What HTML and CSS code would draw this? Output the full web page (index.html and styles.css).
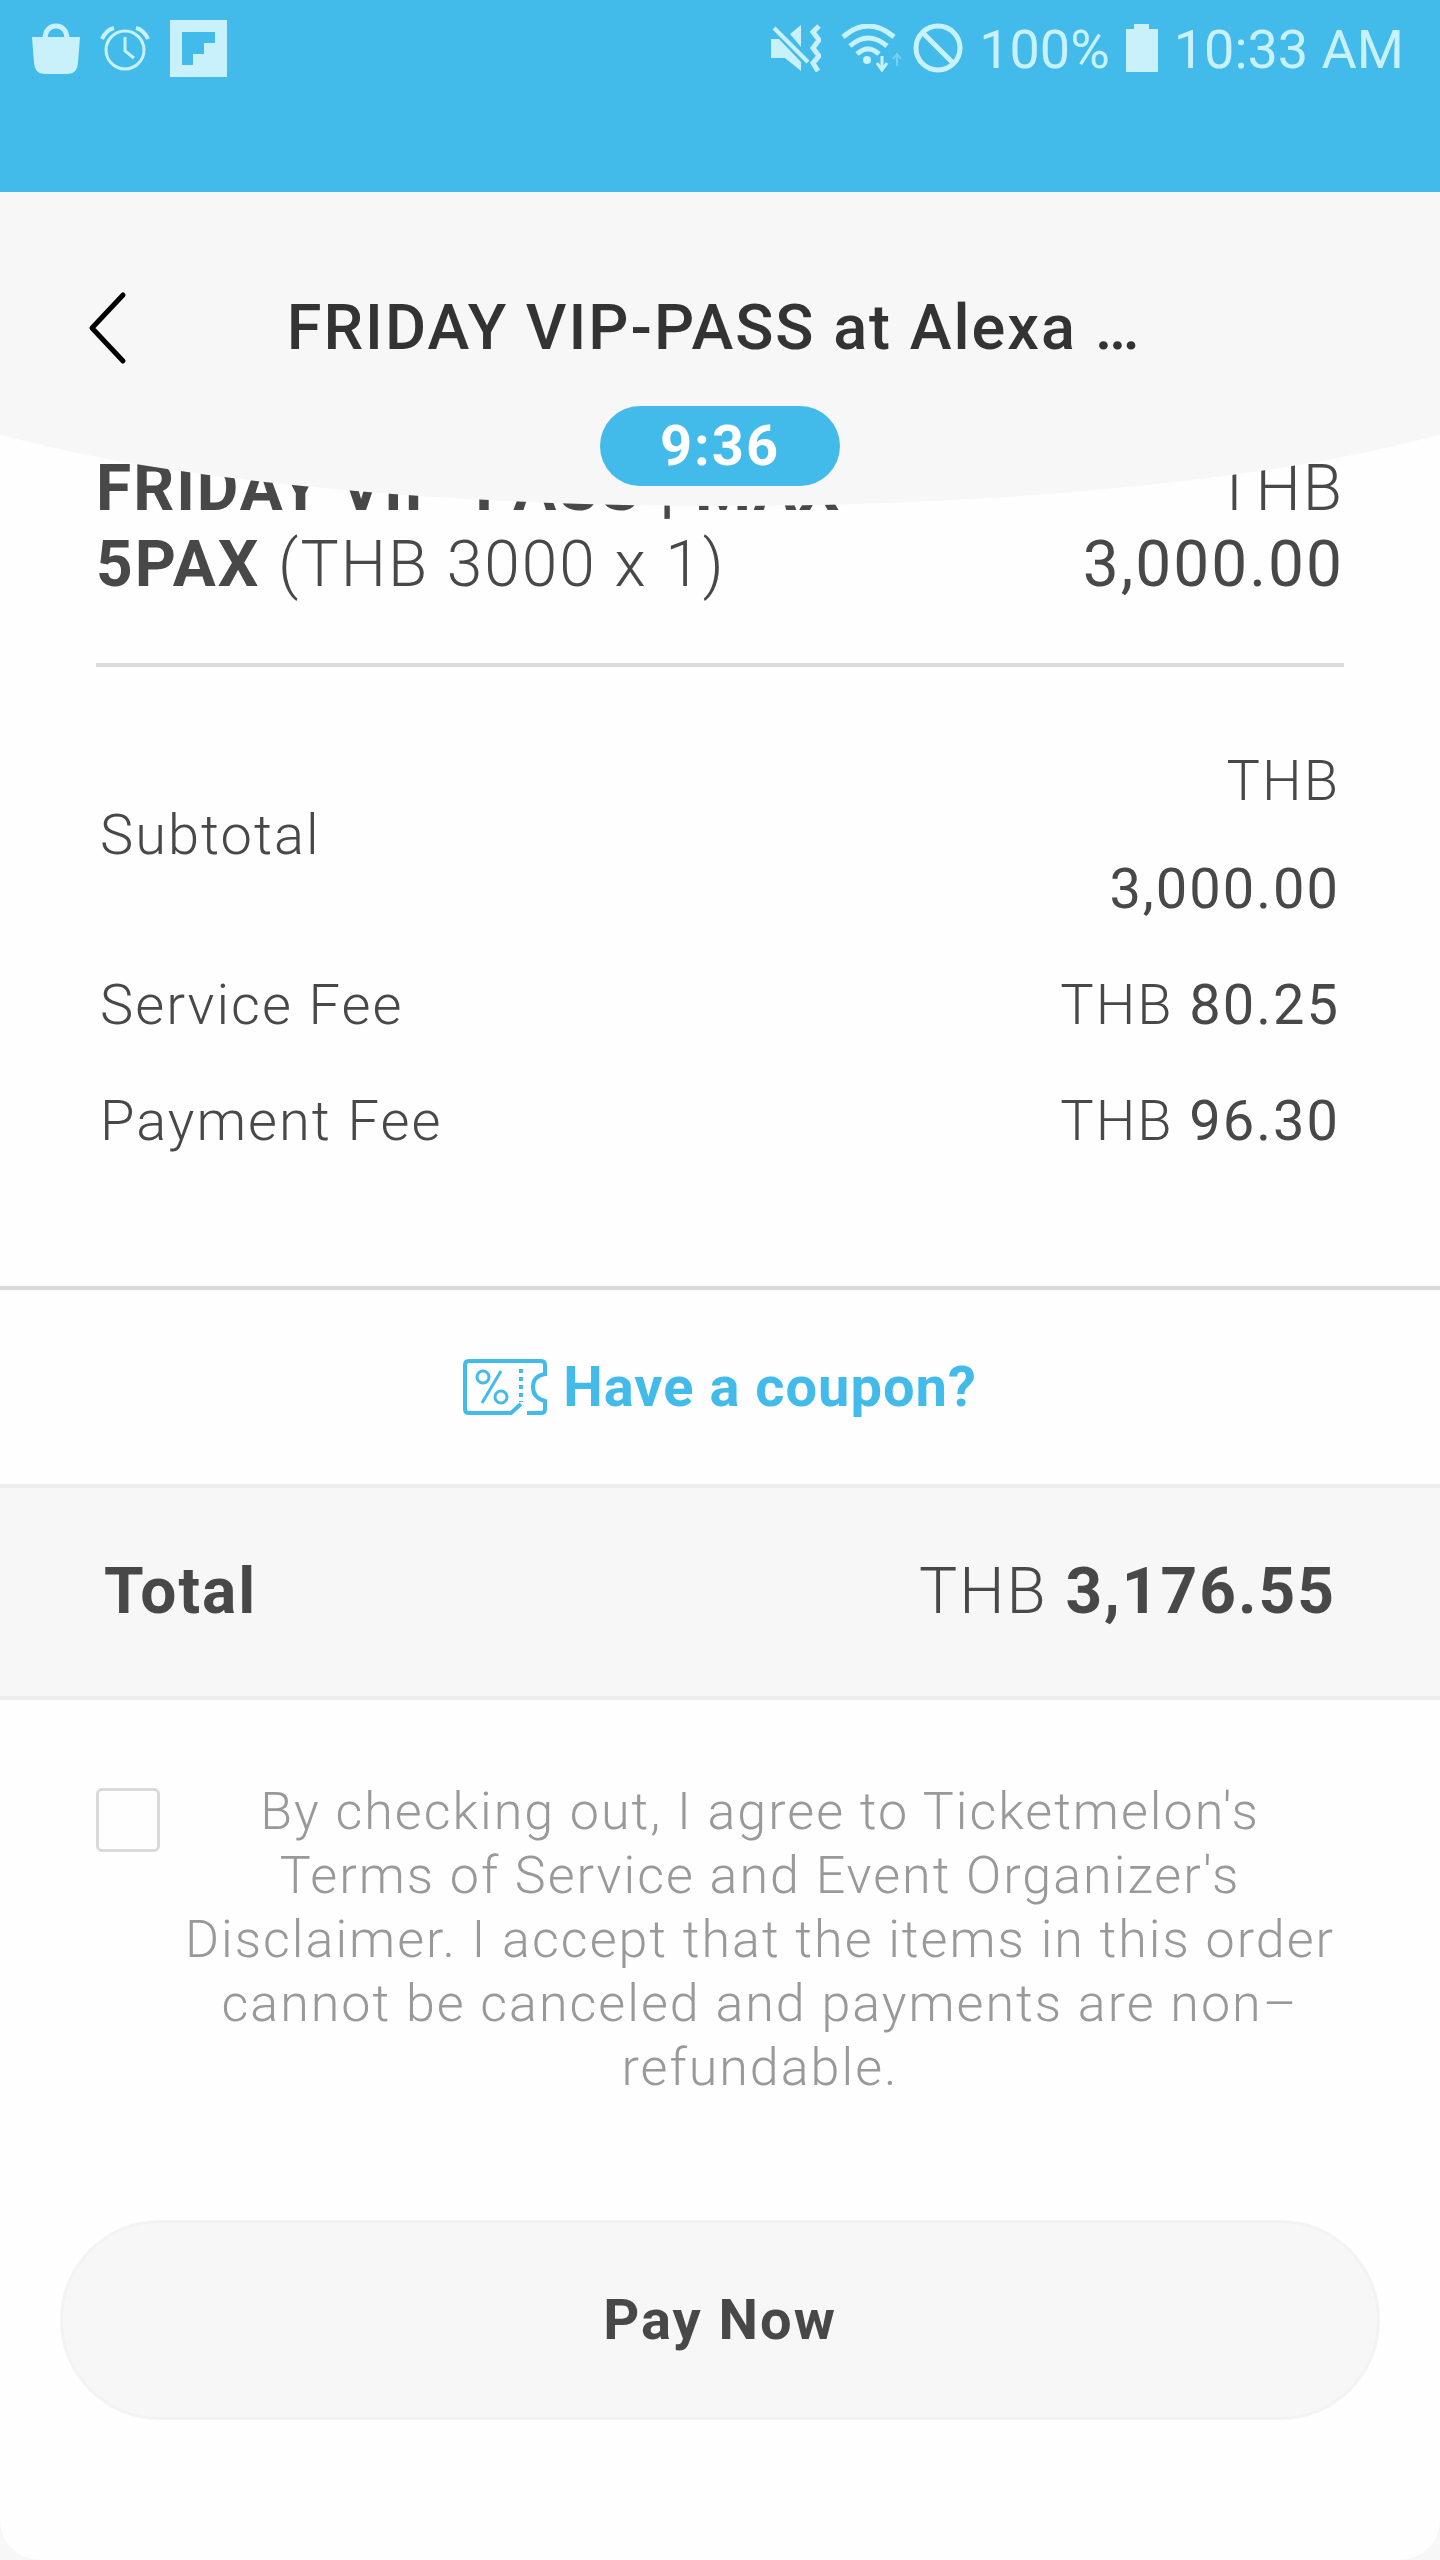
FILE: index.html
```html
<!DOCTYPE html>
<html lang="en">
<head>
  <meta charset="utf-8">
  <meta name="viewport" content="width=device-width, initial-scale=1">
  <title>Checkout</title>
  <link rel="stylesheet" href="styles.css">
</head>
<body>
  <div class="status-bar">
    <div class="status-group status-group-left">
      <svg class="status-bag" viewBox="0 0 48 52" aria-hidden="true">
        <path d="M13 17C13 8 18 4 24 4s11 4 11 13" fill="none" stroke="currentColor" stroke-width="5"/>
        <path d="M0 15h48l-2 26q-1 11-10 11H12Q3 52 2 41z" fill="currentColor"/>
      </svg>
      <svg class="status-alarm" viewBox="0 0 50 46" fill="none" stroke="currentColor" stroke-width="3" aria-hidden="true">
        <circle cx="25" cy="25" r="19"/>
        <path d="M25 12v14l9 7"/>
        <path d="M2 14Q6 5 14 3M48 14Q44 5 36 3" stroke-width="4"/>
      </svg>
      <svg class="status-news" viewBox="0 0 57 57" aria-hidden="true">
        <path d="M0 0h57v57H0zM12 12v33h11V34h11V23h11V12z" fill="currentColor" fill-rule="evenodd"/>
      </svg>
    </div>
    <div class="status-group">
      <svg class="status-mute" viewBox="0 0 50 48" aria-hidden="true">
        <path d="M0 15h8l22 23v9L14 34H0zM19 10l11-9v22z" fill="currentColor"/>
        <path d="M3 4l34 34" stroke="currentColor" stroke-width="4"/>
        <path d="M48 2l-6 6 6 8-6 8 6 8-6 7 5 8" fill="none" stroke="currentColor" stroke-width="5"/>
      </svg>
      <svg class="status-wifi" viewBox="0 0 60 48" fill="none" stroke="currentColor" aria-hidden="true">
        <path d="M2 13Q27-9 53 13M9 22q18-16 37 0M16 30q11-10 22 0" stroke-width="5"/>
        <circle cx="26" cy="36" r="4" fill="currentColor" stroke="none"/>
        <path d="M41 32v13M36 39l5 7 5-7" stroke-width="3"/>
        <path d="M56 42V30M52 35l4-5 4 5" stroke-width="2" opacity="0.4"/>
      </svg>
      <svg class="status-blocked" viewBox="0 0 50 50" fill="none" stroke="currentColor" stroke-width="5" aria-hidden="true">
        <circle cx="25" cy="25" r="22"/>
        <path d="M9 9l32 32"/>
      </svg>
      <span class="status-text">100%</span>
      <svg class="status-battery" viewBox="0 0 32 48" aria-hidden="true">
        <path d="M0 5h8V0h15v5h9v43H0z" fill="currentColor"/>
      </svg>
      <span class="status-text">10:33 AM</span>
    </div>
  </div>

  <header class="header">
    <div class="header-row">
      <button class="back" type="button" aria-label="Back">
        <svg class="back-icon" viewBox="0 0 40 76" fill="none" stroke="currentColor" stroke-width="5" stroke-linecap="round" stroke-linejoin="round" aria-hidden="true">
          <path d="M35 5L4 38l31 33"/>
        </svg>
      </button>
      <h1 class="title">FRIDAY VIP-PASS at Alexa …</h1>
    </div>
    <div class="timer">9:36</div>
  </header>

  <main class="sheet">
    <section class="item">
      <div class="item-name"><b>FRIDAY VIP-PASS | MAX 5PAX</b> (THB 3000 x 1)</div>
      <div class="item-price">THB <span class="amount">3,000.00</span></div>
    </section>

    <table class="fees">
      <tbody>
        <tr><th scope="row">Subtotal</th><td>THB <span class="amount">3,000.00</span></td></tr>
        <tr><th scope="row">Service Fee</th><td>THB <span class="amount">80.25</span></td></tr>
        <tr><th scope="row">Payment Fee</th><td>THB <span class="amount">96.30</span></td></tr>
      </tbody>
    </table>

    <a class="coupon" href="#coupon">
      <svg class="coupon-icon" viewBox="0 0 84 56" fill="none" stroke="currentColor" stroke-width="4" aria-hidden="true">
        <path d="M64 54h14q4 0 4-4v-8q-12-3-12-14t12-13V6q0-4-4-4H6Q2 2 2 6v44q0 4 4 4h42l10-9"/>
        <path d="M58 10v33" stroke-dasharray="4 4"/>
        <circle cx="20" cy="18" r="6" stroke-width="3"/>
        <circle cx="38" cy="38" r="6" stroke-width="3"/>
        <path d="M38 12L19 44" stroke-width="3"/>
      </svg>
      <span>Have a coupon?</span>
    </a>

    <section class="total">
      <b>Total</b>
      <span>THB <b>3,176.55</b></span>
    </section>

    <form class="checkout">
      <div class="terms">
        <input class="terms-box" id="agree" type="checkbox">
        <label class="terms-text" for="agree">By checking out, I agree to Ticketmelon's Terms of Service and Event Organizer's Disclaimer. I accept that the items in this order cannot be canceled and payments are non–refundable.</label>
      </div>
      <button class="pay" type="button">Pay Now</button>
    </form>
  </main>
</body>
</html>
```
FILE: styles.css
```css
* {
  box-sizing: border-box;
}

body {
  display: flex;
  flex-direction: column;
  min-height: 100vh;
  margin: 0;
  background: #f7f7f7;
  color: #484848;
  font-family: Roboto, "Liberation Sans", sans-serif;
  font-size: 56px;
  font-weight: 300;
  letter-spacing: 2px;
}

b {
  font-weight: 700;
}

svg {
  display: block;
  flex: none;
}

/* Status bar */
.status-bar {
  display: flex;
  justify-content: space-between;
  align-items: flex-start;
  height: 192px;
  padding: 16px 36px 0 32px;
  background: #43bbea;
  color: #c9f1fb;
  letter-spacing: 0;
}

.status-group {
  display: flex;
  align-items: center;
  gap: 16px;
  height: 64px;
}

.status-group-left {
  gap: 20px;
}

.status-bag { width: 48px; height: 52px; }
.status-alarm { width: 50px; height: 46px; }
.status-news { width: 57px; height: 57px; }
.status-mute { width: 50px; height: 48px; margin-right: 4px; }
.status-wifi { width: 60px; height: 48px; margin-right: -4px; }
.status-blocked { width: 50px; height: 50px; }
.status-battery { width: 32px; height: 48px; }

.status-text {
  padding-top: 4px;
  font-size: 54px;
  font-weight: 400;
  line-height: 64px;
}

/* Header with a curved lower edge */
.header {
  position: relative;
  z-index: 1;
  display: flex;
  flex-direction: column;
  align-items: center;
  gap: 40px;
  padding: 98px 84px 20px;
  overflow: hidden;
}

.header::before {
  content: "";
  position: absolute;
  z-index: -1;
  inset: 0 -10%;
  background: #f7f7f7;
  border-radius: 0 0 50% 50% / 0 0 160px 160px;
}

.header-row {
  display: grid;
  grid-template-columns: 1fr auto 1fr;
  align-items: center;
  width: 100%;
  padding-right: 12px;
}

.back {
  justify-self: start;
  padding: 0 4px;
  border: 0;
  background: none;
  color: #000;
}

.back-icon {
  width: 40px;
  height: 76px;
}

.title {
  margin: 0;
  color: #333;
  font-size: 63px;
  font-weight: 500;
  line-height: 76px;
}

.timer {
  width: 240px;
  border-radius: 40px;
  background: #43bbea;
  color: #fff;
  font-weight: 700;
  line-height: 80px;
  text-align: center;
}

/* Order sheet, scrolled partly under the header */
.sheet {
  flex: 1;
  margin-top: -72px;
  padding-top: 17px;
  border-radius: 0 0 40px 40px;
  background: #fefefe;
}

.item {
  display: flex;
  justify-content: space-between;
  margin: 0 96px;
  padding-bottom: 60px;
  border-bottom: 4px solid #dadada;
  font-size: 64px;
  line-height: 76px;
}

.item-name {
  width: 65%;
}

.item-price {
  width: 25%;
  text-align: right;
}

.amount {
  font-weight: 400;
}

.fees {
  width: calc(100% - 192px);
  margin: 56px 96px 107px;
  border-collapse: collapse;
  line-height: 108px;
}

.fees th,
.fees td {
  padding: 4px;
  font-weight: 300;
  text-align: left;
  vertical-align: middle;
}

.fees td {
  width: 25%;
  text-align: right;
}

.coupon {
  display: flex;
  justify-content: center;
  align-items: center;
  gap: 16px;
  height: 198px;
  border-top: 4px solid #dadada;
  color: #43bbea;
  font-weight: 700;
  letter-spacing: 1px;
  text-decoration: none;
}

.coupon-icon {
  width: 84px;
  height: 56px;
}

.total {
  display: flex;
  justify-content: space-between;
  padding: 66px 104px;
  border: solid #eee;
  border-width: 4px 0;
  background: #f7f7f7;
  font-size: 64px;
  line-height: 76px;
}

.checkout {
  display: flex;
  flex-direction: column;
  gap: 120px;
  padding: 80px 60px 140px;
}

.terms {
  display: flex;
  gap: 16px;
  padding: 0 36px;
}

.terms-box {
  flex: none;
  width: 64px;
  height: 64px;
  margin: 8px 0 0;
  appearance: none;
  border: 3px solid #dadada;
  border-radius: 6px;
  background: #fefefe;
}

.terms-box:checked {
  background: #43bbea;
}

.terms-text {
  flex: 1;
  color: #999;
  font-size: 52px;
  line-height: 64px;
  text-align: center;
}

.pay {
  height: 200px;
  border: 3px solid #f3f3f3;
  border-radius: 100px;
  background: #f7f7f7;
  color: #484848;
  font: inherit;
  font-weight: 700;
  letter-spacing: inherit;
}
```
